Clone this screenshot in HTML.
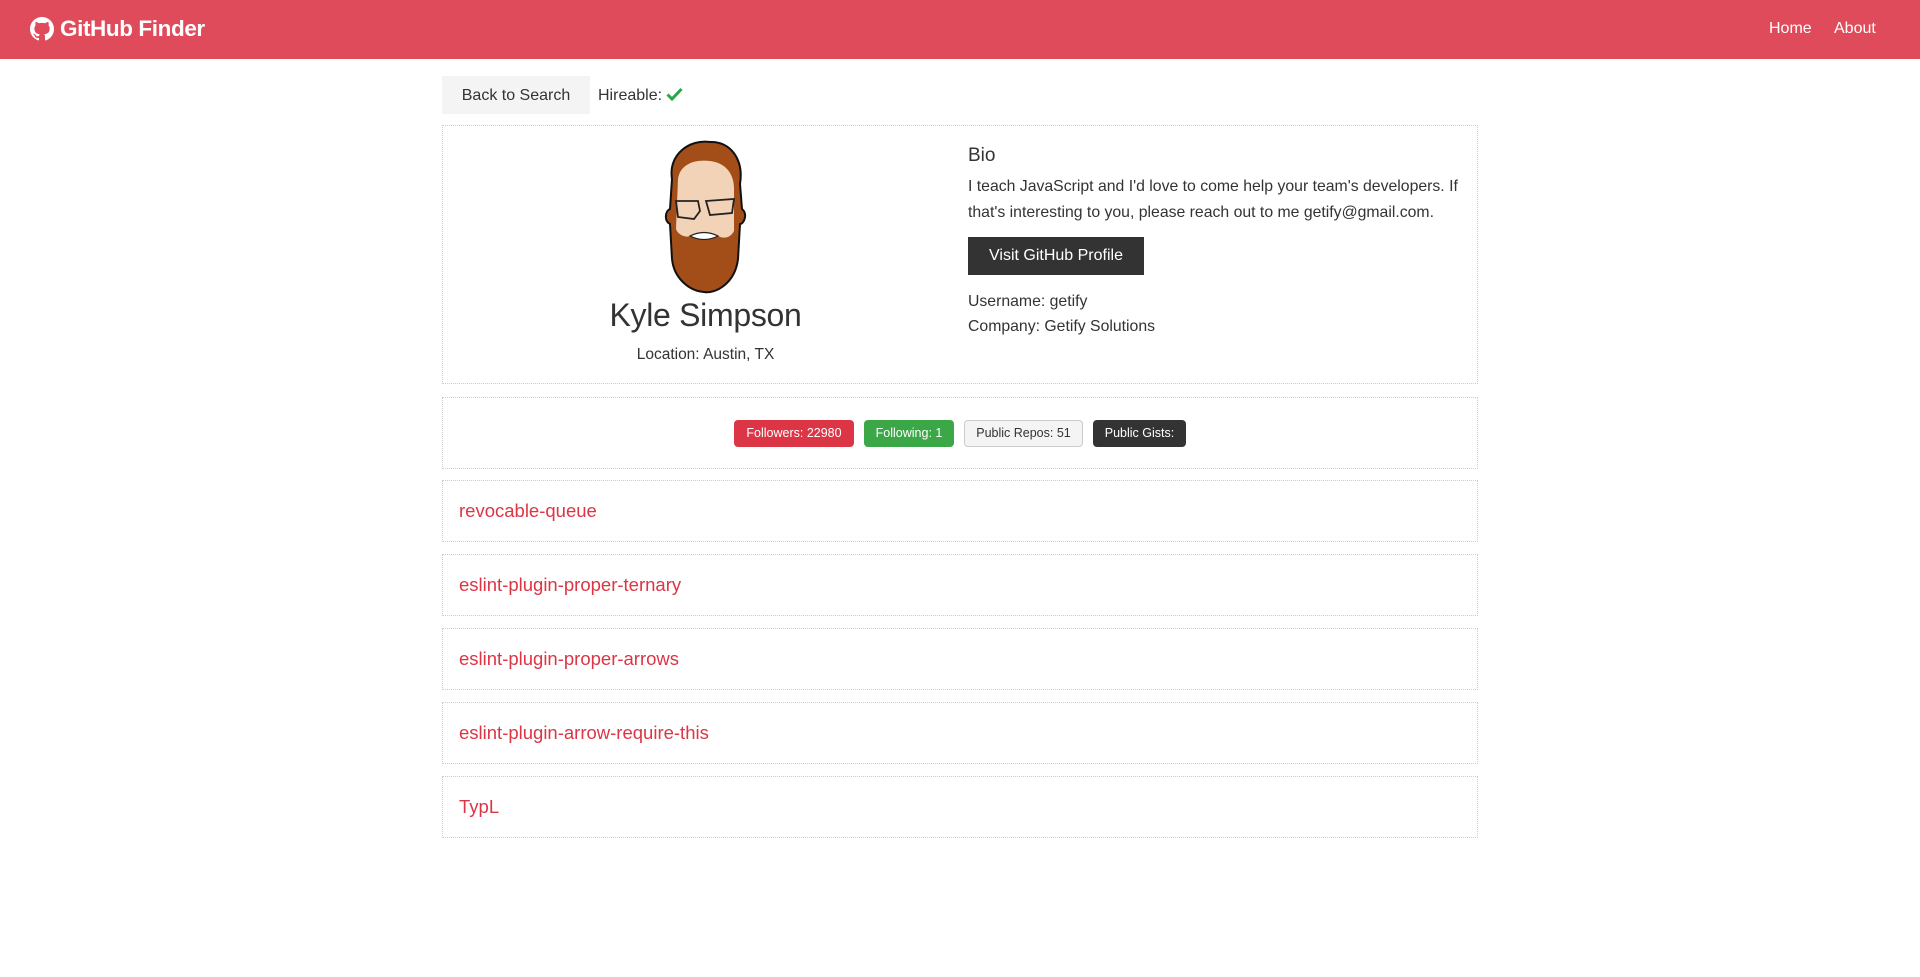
<!DOCTYPE html>
<html><head><meta charset="utf-8"><style>
*{box-sizing:border-box;margin:0;padding:0}
body{width:1920px;height:977px;background:#fff;font-family:"Liberation Sans",Arial,sans-serif;color:#333;position:relative;overflow:hidden}
.nav{position:absolute;left:0;top:0;width:1920px;height:59px;background:#df4b5a;color:#fff}
.logo{position:absolute;left:30px;top:16px;font-size:22.5px;font-weight:bold;display:flex;align-items:center;gap:6px;letter-spacing:-0.4px}
.navlinks a{position:absolute;top:20px;font-size:16px;color:#fff;text-decoration:none}
.abs{position:absolute}
.card{position:absolute;left:442px;width:1036px;border:1px dotted #ccc}
.btnl{left:442px;top:76px;width:148px;height:38px;background:#f4f4f4;font-size:16px;line-height:38px;text-align:center;color:#333;padding-top:1px}
.badge{position:absolute;top:420px;height:27px;border-radius:4px;font-size:12.5px;line-height:27px;text-align:center}
.repo{position:absolute;left:459px;font-size:18.5px;color:#dc3545}
</style></head><body>
<div class="nav">
<div class="logo"><svg width="24" height="24" viewBox="0 0 16 16"><path fill="#fff" d="M8 0C3.58 0 0 3.58 0 8c0 3.540 2.29 6.53 5.47 7.59.4.07.55-.17.55-.38v-1.330c-2.23.48-2.7-1.07-2.7-1.07-.36-.92-.89-1.17-.89-1.17-.73-.5.06-.49.06-.49.8.06 1.23.83 1.23.83.71 1.22 1.87.87 2.33.66.07-.52.28-.87.51-1.07-1.78-.2-3.64-.89-3.640-3.95 0-.87.31-1.59.82-2.15-.08-.2-.36-1.02.08-2.12 0 0 .67-.21 2.2.82a7.6 7.6 0 0 1 4 0c1.53-1.04 2.2-.82 2.2-.82.44 1.1.16 1.92.08 2.12.51.56.82 1.27.82 2.15 0 3.07-1.87 3.75-3.65 3.95.29.25.54.73.54 1.48v2.2c0 .21.15.46.55.38A8 8 0 0 0 16 8c0-4.42-3.58-8-8-8z"/></svg>GitHub Finder</div>
<div class="navlinks"><a style="left:1769px">Home</a><a style="left:1834px">About</a></div>
</div>
<div class="abs btnl">Back to Search</div>
<div class="abs" style="left:598px;top:87px;font-size:16px">Hireable: <svg width="17" height="14" viewBox="0 0 17 14" style="vertical-align:-1px"><path d="M1.5 7.5l4.5 4.5L15.5 2" stroke="#28a745" stroke-width="3" fill="none"/></svg></div>

<div class="card" style="top:125px;height:259px"></div>
<svg class="abs" style="left:660px;top:139px" width="90" height="155" viewBox="0 0 90 155">
<path d="M12 40 C8 15 30 0 50 3 C70 2 84 20 80 45 L82 70 C88 75 84 85 80 85 L78 120 C75 145 55 155 44 153 C30 152 14 140 12 120 L10 85 C4 82 5 72 10 70 Z" fill="#a34d18" stroke="#111" stroke-width="2"/>
<path d="M18 40 C20 25 35 20 50 22 C66 24 74 35 74 50 L74 92 C70 100 62 100 56 96 L34 96 C26 100 18 96 16 90 Z" fill="#f3d3b8"/>
<path d="M16 62 L38 62 L40 72 L34 80 L18 78 Z M46 62 L74 60 L72 74 L50 76 Z" fill="none" stroke="#222" stroke-width="1.8"/>
<path d="M30 97 Q44 90 58 97 Q44 104 30 97 Z" fill="#fff" stroke="#222" stroke-width="1.2"/>
</svg>
<div class="abs" style="left:442px;width:527px;top:297px;font-size:32px;text-align:center;color:#333;letter-spacing:-0.3px">Kyle Simpson</div>
<div class="abs" style="left:442px;width:527px;top:346px;font-size:15.5px;text-align:center">Location: Austin, TX</div>

<div class="abs" style="left:968px;top:145px;font-size:19px">Bio</div>
<div class="abs" style="left:968px;top:174px;font-size:15.8px;line-height:26px;width:510px">I teach JavaScript and I'd love to come help your team's developers. If that's interesting to you, please reach out to me getify@gmail.com.</div>
<div class="abs" style="left:968px;top:237px;width:176px;height:38px;background:#333;color:#fff;font-size:16px;line-height:38px;text-align:center">Visit GitHub Profile</div>
<div class="abs" style="left:968px;top:293px;font-size:15.8px">Username: getify</div>
<div class="abs" style="left:968px;top:318px;font-size:15.8px">Company: Getify Solutions</div>

<div class="card" style="top:397px;height:72px"></div>
<div class="badge" style="left:734px;width:120px;background:#dc3545;color:#fff">Followers: 22980</div>
<div class="badge" style="left:864px;width:90px;background:#3ba746;color:#fff">Following: 1</div>
<div class="badge" style="left:964px;width:119px;background:#f4f4f4;border:1px solid #ccc;color:#333;line-height:25px">Public Repos: 51</div>
<div class="badge" style="left:1093px;width:93px;background:#333;color:#fff">Public Gists:</div>

<div class="card" style="top:480px;height:62px"></div><div class="repo" style="top:500px">revocable-queue</div>
<div class="card" style="top:554px;height:62px"></div><div class="repo" style="top:574px">eslint-plugin-proper-ternary</div>
<div class="card" style="top:628px;height:62px"></div><div class="repo" style="top:648px">eslint-plugin-proper-arrows</div>
<div class="card" style="top:702px;height:62px"></div><div class="repo" style="top:722px">eslint-plugin-arrow-require-this</div>
<div class="card" style="top:776px;height:62px"></div><div class="repo" style="top:796px">TypL</div>
</body></html>
